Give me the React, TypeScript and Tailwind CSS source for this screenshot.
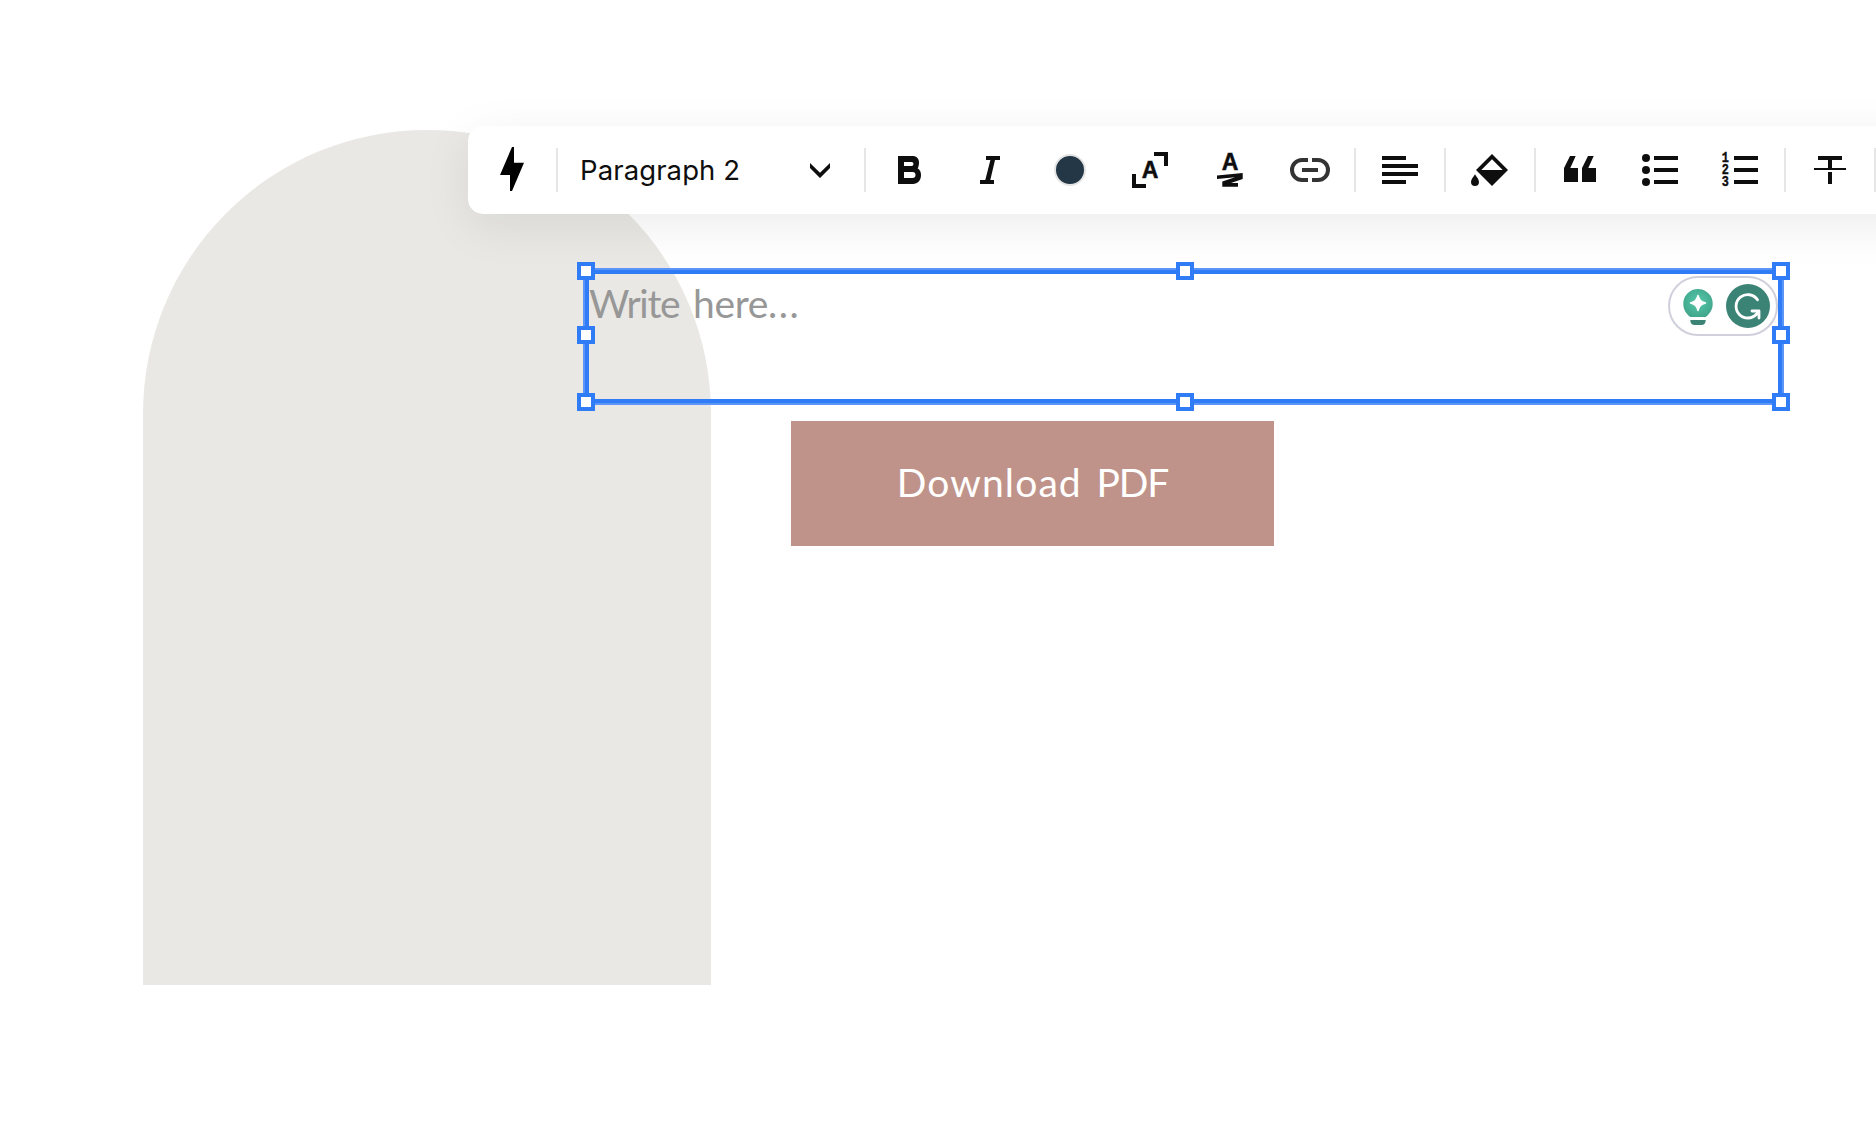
import type { ReactNode } from "react";

function Icon({ children, color = "#0e0e0e" }: { children: ReactNode; color?: string }) {
  return (
    <svg width="48" height="48" viewBox="0 0 48 48" fill={color} className="block shrink-0">
      {children}
    </svg>
  );
}

function ToolButton({ label, children }: { label: string; children: ReactNode }) {
  return (
    <button aria-label={label} className="flex h-[88px] w-20 shrink-0 items-center justify-center">
      {children}
    </button>
  );
}

function Separator() {
  return <div className="mx-1 h-11 w-0.5 shrink-0 bg-[#e6e6e6]" />;
}

function LetterA({ y }: { y: number }) {
  return (
    <text
      x="24"
      y={y}
      textAnchor="middle"
      fontFamily="Liberation Sans"
      fontWeight="700"
      fontSize="23"
      stroke="#0e0e0e"
      strokeWidth="0.5"
    >
      A
    </text>
  );
}

const BARS = "M18 10h24v4H18zM18 22h24v4H18zM18 34h24v4H18z";

function Toolbar() {
  return (
    <div className="absolute top-[126px] left-[468px] flex h-[88px] w-[1500px] items-center rounded-[15px] bg-white pl-1 shadow-[0_12px_48px_rgba(0,0,0,0.08)]">
      <ToolButton label="Quick actions">
        <Icon color="#000">
          <path d="M24 1h2v15.7h10L24 45h-2V29H12z" />
        </Icon>
      </ToolButton>
      <Separator />
      <button className="flex h-[88px] w-[298px] shrink-0 items-center justify-between pr-7 pl-[18px]">
        <span className="font-['Inter'] text-[27.500px] leading-8 tracking-[0.100px] whitespace-nowrap text-[#0e0e0e]">
          Paragraph 2
        </span>
        <svg width="24" height="24" viewBox="0 0 24 24" fill="#0e0e0e">
          <path d="M2 5l10 9.7L22 5v5L12 20 2 10z" />
        </svg>
      </button>
      <Separator />
      <ToolButton label="Bold">
        <Icon>
          <path
            fillRule="evenodd"
            d="M12 10h14.500C30.500 10 33 12.700 33 16.300c0 2.600-.5 4.900-1.300 6.200C33.800 23.600 35 26 35 29c0 5.500-3.300 9-8 9H12zM18 16v4h7.500a2 2 0 0 0 0-4zM18 26v6h8.500a3 3 0 0 0 0-6z"
          />
        </Icon>
      </ToolButton>
      <ToolButton label="Italic">
        <Icon>
          <path d="M20 10h14v4h-5l-4.700 20H28v4H14v-4h5.300L24.400 14H20z" />
        </Icon>
      </ToolButton>
      <ToolButton label="Text colour">
        <div className="size-8 rounded-full border-2 border-[#e4e4e4] bg-[#243746]" />
      </ToolButton>
      <ToolButton label="Font size">
        <Icon>
          <path d="M28 6h14v14h-4V10H28zM6 28h4v10h10v4H6z" />
          <LetterA y={32} />
        </Icon>
      </ToolButton>
      <ToolButton label="Highlight">
        <Icon>
          <LetterA y={24} />
          <path d="M11 29.500L36.700 27v6L25 37h7v3.700H16.300v-5.200L29 31.300 11 33z" />
        </Icon>
      </ToolButton>
      <ToolButton label="Link">
        <Icon color="none">
          <path
            stroke="#333"
            strokeWidth="4"
            d="M22 14h-6a10 10 0 0 0 0 20h6M26 14h6a10 10 0 0 1 0 20h-6M16 24h16"
          />
        </Icon>
      </ToolButton>
      <Separator />
      <ToolButton label="Align">
        <Icon>
          <path d="M6 10h24v4H6zM6 18h36v4H6zM6 26h36v4H6zM6 34h24v4H6z" />
        </Icon>
      </ToolButton>
      <Separator />
      <ToolButton label="Background">
        <Icon>
          <path fillRule="evenodd" d="M26 8l16 16-16 16-16-16zM26 13.300L15.300 24h21.400z" />
          <path d="M9 28.300c1.500 2.500 4 5 4 7.700a4 4 0 0 1-8 0c0-2.700 2.500-5.200 4-7.700z" />
        </Icon>
      </ToolButton>
      <Separator />
      <ToolButton label="Quote">
        <Icon>
          <path d="M14 10h5.700L14.300 22H22v14H8V22zM32 10h5.700l-5.400 12H40v14H26V22z" />
        </Icon>
      </ToolButton>
      <ToolButton label="Bulleted list">
        <Icon>
          <circle cx="10" cy="12" r="4" />
          <circle cx="10" cy="24" r="4" />
          <circle cx="10" cy="36" r="4" />
          <path d={BARS} />
        </Icon>
      </ToolButton>
      <ToolButton label="Numbered list">
        <Icon>
          <text
            transform="translate(9.2 0) scale(0.82 1)"
            fontFamily="Liberation Mono"
            fontWeight="700"
            fontSize="14.500"
            textAnchor="middle"
            stroke="#0e0e0e"
            strokeWidth="0.4"
          >
            <tspan x="0" y="15.800">1</tspan>
            <tspan x="0" y="27.900">2</tspan>
            <tspan x="0" y="39.800">3</tspan>
          </text>
          <path d={BARS} />
        </Icon>
      </ToolButton>
      <Separator />
      <ToolButton label="Text direction">
        <Icon>
          <path d="M12 10h24v4H26v8h14v2H8v-2h14v-8H12zM22 26h4v12h-4z" />
        </Icon>
      </ToolButton>
      <Separator />
    </div>
  );
}

const HANDLES = [
  "-top-1.5 -left-1.5",
  "-top-1.5 left-[593px]",
  "-top-1.5 -right-1.5",
  "top-[58px] -left-1.5",
  "top-[58px] -right-1.5",
  "-bottom-1.5 -left-1.5",
  "-bottom-1.5 left-[593px]",
  "-bottom-1.5 -right-1.5",
];

function AssistantPill() {
  return (
    <div className="absolute top-[8px] right-[6px] flex h-[60px] w-[110px] items-center rounded-full border-2 border-[#d0d0dd] bg-white pl-[10px]">
      <svg width="40" height="44" viewBox="0 0 40 44" className="shrink-0">
        <defs>
          <radialGradient id="bulb" cx="0.5" cy="0.45" r="0.6">
            <stop offset="0" stopColor="#56c9ab" />
            <stop offset="0.5" stopColor="#4ab69a" />
            <stop offset="1" stopColor="#40a48b" />
          </radialGradient>
        </defs>
        <path
          fill="url(#bulb)"
          d="M18 5A14.700 14.700 0 0 0 3.300 19.700c0 5.500 2.700 9.800 7 13.300h15.400c4.300-3.500 7-7.800 7-13.300A14.700 14.700 0 0 0 18 5z"
        />
        <path
          fill="#fff"
          stroke="#fff"
          strokeWidth="1.500"
          strokeLinejoin="round"
          d="M18 11.500c1.400 4.600 2.900 6.100 7.500 7.500-4.600 1.400-6.100 2.900-7.500 7.500-1.400-4.600-2.900-6.100-7.500-7.500 4.600-1.400 6.100-2.900 7.500-7.500z"
        />
        <path fill="#3a8375" d="M10.300 36h15.400c0 3.500-1.500 5-4.500 5h-6.400c-3 0-4.500-1.500-4.500-5z" />
      </svg>
      <svg width="44" height="44" viewBox="0 0 44 44" className="ml-[6px] shrink-0">
        <circle cx="22" cy="22" r="22" fill="#3a8375" />
        <path
          fill="none"
          stroke="#fff"
          strokeWidth="2.800"
          strokeLinecap="round"
          strokeLinejoin="round"
          d="M31.500 15.800A11.700 11.700 0 1 0 30.600 30L32.800 27M26 27h7v7"
        />
      </svg>
    </div>
  );
}

function SelectedText() {
  return (
    <div className="absolute top-[268px] left-[583px] h-[137px] w-[1201px]">
      <p className="absolute top-[10px] left-[6px] font-['Lato'] text-[39px] leading-[50px] whitespace-nowrap text-[#979797]">
        <span className="tracking-[-1.300px]">Write</span>
        <span className="tracking-[-0.300px] [word-spacing:4px]"> here</span>
        <span className="tracking-[1.500px]">...</span>
      </p>
      <div className="absolute inset-0 border-2 border-[#5b95f8]">
        <div className="h-full border-4 border-[#2f7cf6]" />
      </div>
      <AssistantPill />
      {HANDLES.map((place) => (
        <span key={place} className={`absolute size-[18px] border-4 border-[#2f7cf6] bg-white ${place}`} />
      ))}
    </div>
  );
}

export default function App() {
  return (
    <main className="relative h-[1124px] w-full overflow-hidden bg-white">
      <div className="absolute top-[129.600px] left-[142.700px] h-[855px] w-[568.300px] rounded-t-full bg-[#e9e8e4]" />
      <button className="absolute top-[421px] left-[791px] flex h-[125px] w-[483px] items-center justify-center bg-[#bf9389] pb-[3px] font-['Lato'] text-[39px] leading-[50px] whitespace-nowrap text-white">
        <span>
          <span className="tracking-[1.100px]">Download</span>
          <span className="tracking-[-1.200px] [word-spacing:6px]"> PDF</span>
        </span>
      </button>
      <Toolbar />
      <SelectedText />
    </main>
  );
}
